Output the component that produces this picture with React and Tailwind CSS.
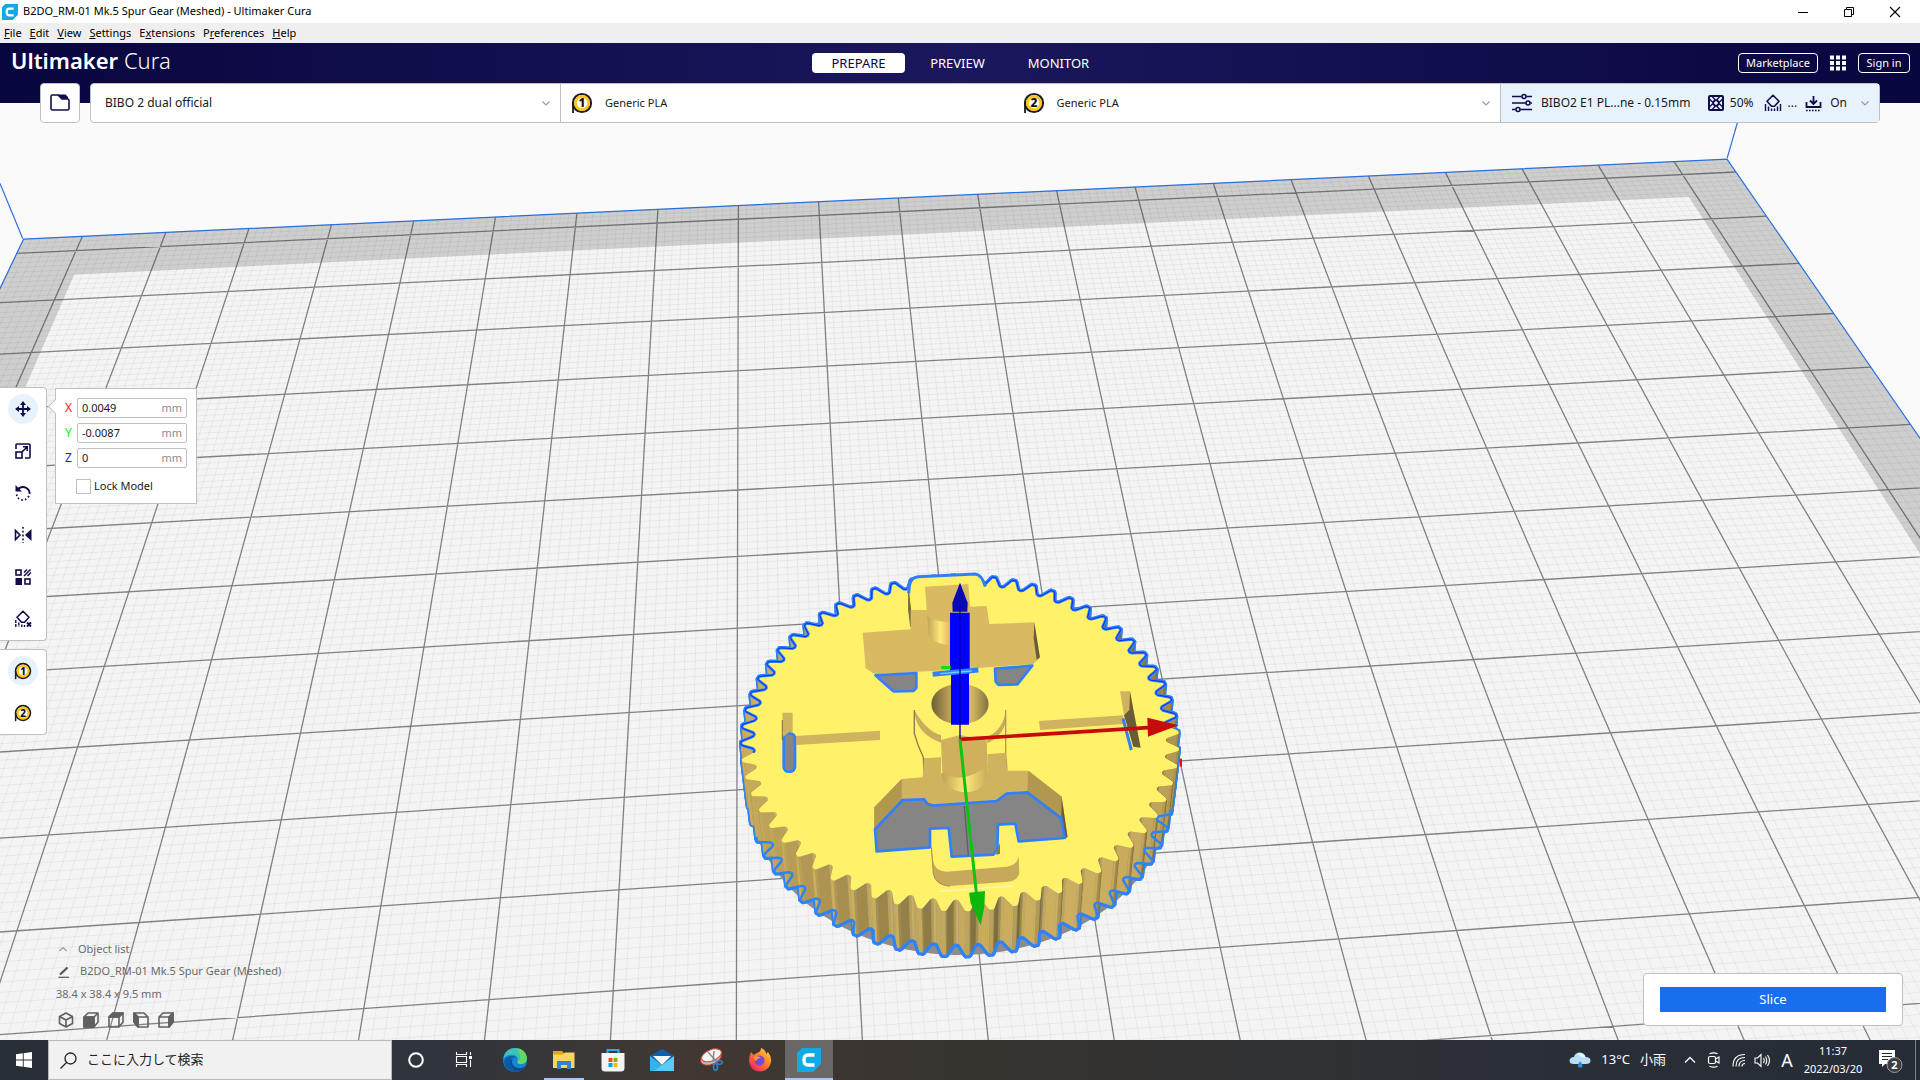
import React from "react";

/* ---------- build plate projection ---------- */

// [plate x, plate y, screen x, screen y], plate units are centimetres
const ANCHORS = [
  [-10.7, 9.3, 22.7, 238.5],
  [10.7, 9.3, 1727.2, 158.2],
  [-10, 8, 55.1, 300.1],
  [-10, 7, 31.8, 352.8],
  [10, 8, 1711.2, 219.5],
  [10, 6, 1774.9, 317],
  [10, 3, 1888.8, 489.9],
  [-2, 8, 738.4, 266.7],
  [-2, 5, 738, 428.2],
  [-2, 2, 737, 628.7],
  [-2, 0, 737, 789.7],
  [-2, -1, 737, 881.7],
  [-6, -2, 237, 1017.7],
  [-5, -2, 363.7, 1008.3],
  [5, -3, 1613.3, 1025.7],
];

function fitPlane(points) {
  const n = 8;
  const a = Array.from({ length: n }, () => new Array(n + 1).fill(0));
  const add = (row, rhs) => {
    for (let i = 0; i < n; i++) {
      for (let j = 0; j < n; j++) a[i][j] += row[i] * row[j];
      a[i][n] += row[i] * rhs;
    }
  };
  points.forEach(([u0, v0, x0, y0]) => {
    const u = u0 / 10, v = v0 / 10, x = x0 / 1000, y = y0 / 1000;
    add([u, v, 1, 0, 0, 0, -u * x, -v * x], x);
    add([0, 0, 0, u, v, 1, -u * y, -v * y], y);
  });
  for (let c = 0; c < n; c++) {
    let p = c;
    for (let r = c + 1; r < n; r++) if (Math.abs(a[r][c]) > Math.abs(a[p][c])) p = r;
    [a[c], a[p]] = [a[p], a[c]];
    for (let r = 0; r < n; r++) {
      if (r === c) continue;
      const f = a[r][c] / a[c][c];
      for (let k = c; k <= n; k++) a[r][k] -= f * a[c][k];
    }
  }
  return a.map((row, i) => row[n] / row[i]);
}

const H = fitPlane(ANCHORS);
const depth = (u, v) => (H[6] * u) / 10 + (H[7] * v) / 10 + 1;
const LIFT = -0.0275 * depth(0, -1.9);

function project(u, v, z = 0) {
  const w = depth(u, v);
  const x = ((H[0] * u) / 10 + (H[1] * v) / 10 + H[2]) * 1000;
  const y = ((H[3] * u) / 10 + (H[4] * v) / 10 + H[5]) * 1000;
  const k = LIFT * z;
  return [(x + 960 * k) / (w + k), (y + 2550 * k) / (w + k)];
}

const fmt = (p) => `${p[0].toFixed(1)},${p[1].toFixed(1)}`;
const poly = (pts) => pts.map(fmt).join(" ");
const seg = (a, b) => `M${fmt(a)}L${fmt(b)}`;

const BX = 10.7, BY = 9.3;
let minor = "";
let major = "";
for (let i = -107; i <= 107; i++) {
  const d = seg(project(i / 10, BY), project(i / 10, -BY));
  if (i % 10 === 0) major += d;
  else minor += d;
}
for (let i = -93; i <= 93; i++) {
  const d = seg(project(-BX, i / 10), project(BX, i / 10));
  if (i % 10 === 0) major += d;
  else minor += d;
}
const rectPts = (x, y) => [project(-x, y), project(x, y), project(x, -y), project(-x, -y)];
const BED = rectPts(BX, BY);
const USABLE = rectPts(9.9, 8.5);

/* ---------- gear body ---------- */

const TEETH = 62;
const PROFILE = [[0.0, 1.8], [0.12, 1.81], [0.36, 1.9], [0.42, 1.915], [0.58, 1.915], [0.64, 1.9], [0.88, 1.81]];
const RIM = [];
for (let t = 0; t < TEETH; t++) {
  PROFILE.forEach(([f, r]) => {
    const ang = (2 * Math.PI * (t + f)) / TEETH - Math.PI / 2;
    RIM.push([r * Math.cos(ang), r * Math.sin(ang)]);
  });
}
const TOP = RIM.map(([u, v]) => project(u, v, 1));
const BOTTOM = RIM.map(([u, v]) => project(u, v, 0));
const SHADOW = Array.from({ length: 120 }, (_, i) => {
  const t = (i * Math.PI) / 60;
  return project(1.9 * Math.cos(t), 1.9 * Math.sin(t));
});
const WALLS = RIM.map((p, i) => {
  const j = (i + 1) % RIM.length;
  const q = RIM[j];
  const du = q[0] - p[0], dv = q[1] - p[1];
  const len = Math.hypot(du, dv);
  const nu = dv / len, nv = -du / len;
  const light = Math.max(0, Math.min(1, 0.42 - 0.4 * nv - 0.35 * nu));
  const mix = (a, b) => Math.round(a + (b - a) * light);
  return {
    v: (p[1] + q[1]) / 2,
    pts: poly([TOP[i], TOP[j], BOTTOM[j], BOTTOM[i]]),
    fill: `rgb(${mix(98, 210)},${mix(85, 179)},${mix(48, 98)})`,
  };
}).sort((a, b) => b.v - a.v);

const half = (pts, keep) => {
  let d = "";
  let open = false;
  const start = Math.floor(RIM.length / 4);
  for (let k = 0; k <= RIM.length; k++) {
    const i = (start * (keep > 0 ? 3 : 1) + k) % RIM.length;
    if (RIM[i][1] * keep >= (keep > 0 ? -0.12 : 0.5)) {
      d += `${open ? "L" : "M"}${fmt(pts[i])}`;
      open = true;
    } else open = false;
  }
  return d;
};
const TOP_EDGE = half(TOP, 1);
const BOTTOM_EDGE = half(BOTTOM, -1);

function Gear() {
  return (
    <g>
      <polygon points={poly(SHADOW)} fill="#8c8c8c" />
      {WALLS.map((w, i) => (
        <polygon key={i} points={w.pts} fill="#2f83f7" stroke="#2f83f7" strokeWidth="4" strokeLinejoin="round" />
      ))}
      {WALLS.map((w, i) => (
        <polygon key={i} points={w.pts} fill={w.fill} stroke={w.fill} strokeWidth="0.4" />
      ))}
      <path d={BOTTOM_EDGE} fill="none" stroke="#2f83f7" strokeWidth="2.5" strokeLinejoin="round" />
      <polygon points={poly(TOP)} fill="#fff26a" />
      <path d={TOP_EDGE} fill="none" stroke="#2f7ffc" strokeWidth="2.8" strokeLinejoin="round" />
      <path d={TOP_EDGE} fill="none" stroke="#0a2cf0" strokeWidth="1" strokeLinejoin="round" />
      <g transform="translate(720 560) scale(0.33333)">
        <path d="M558,102 L566,78 Q572,52 594,50 L766,42 Q786,44 796,84 L800,120 L690,160 L570,140Z" fill="#fff26a" />
        <path d="M566,100 L568,78 Q572,52 594,50 L766,42 Q786,44 796,80" fill="none" stroke="#2f7ffc" strokeWidth="9" />
        <path d="M566,100 V150 L572,200 V150Z" fill="#77673a" stroke="#77673a" strokeWidth="3" />
        <path d="M572,150 L620,150 L615,80 L745,72 L750,140 L800,138 L808,192 L943,187 L957,295 L940,312 L690,330 L465,343 L437,325 L428,218 L572,208Z" fill="#d9ba61" />
        <path d="M622,165 Q635,188 700,185 V257 Q640,253 626,222Z" fill="url(#boss)" />
        <path d="M943,187 L960,292 L950,300 L941,235Z" fill="#6a5d36" />
        <g fill="#858585" stroke="#2f80ff" strokeWidth="8" strokeLinejoin="round">
          <path d="M466,346 L589,339 V384 L580,393 L520,394Z" />
          <path d="M825,326 L937,317 L892,373 L836,375 L827,365Z" />
          <rect x="191" y="520" width="34" height="115" rx="15" />
        </g>
        {/* hub */}
        <path d="M583,450 Q590,520 663,548 V528 H800 V528 Q850,500 857,450 L857,500 L858,578 L612,595 L604,550 Q580,530 583,450Z" fill="#fff26a" />
        <path d="M583,450 Q586,520 663,548 V525 Q620,515 583,450Z" fill="#c9ad5c" />
        <path d="M857,450 Q850,510 802,530 V550 Q850,525 857,485Z" fill="#c9ad5c" />
        <path d="M583,450 V520 Q592,555 610,592 L612,645" fill="none" stroke="#8d7a43" strokeWidth="4" />
        <path d="M857,450 V578 L861,632" fill="none" stroke="#b59b52" strokeWidth="4" />
        <ellipse cx="720" cy="432" rx="86" ry="61" fill="url(#bore)" />
        <path d="M612,595 L663,592 V640 H802 V583 L858,578 L860,632 L925,632 L1025,710 L1042,832 L1030,775 L922,698 L860,703 L830,725 L640,738 L612,722 L548,722 L463,808 V742 L545,657 L608,652Z" fill="#d0b35f" />
        <path d="M545,657 L463,742 V808 L545,722Z" fill="#b2974f" />
        <path d="M925,632 L1025,710 V775 L922,698Z" fill="#b2974f" />
        <path d="M1025,710 L1043,832 L1032,834 L1024,770Z" fill="#6a5d36" />
        <path d="M663,540 L720,525 L800,540 L802,620 Q790,690 735,695 Q670,690 667,640Z" fill="#cfb05c" />
        <path d="M667,640 Q735,675 802,615 V650 Q790,695 735,697 Q675,692 667,655Z" fill="url(#boss)" />
        {/* cut-out */}
        <path d="M548,720 L612,718 L622,731 L640,737 L830,723 L860,701 L922,697 L1024,775 L1034,834 L896,844 L886,791 L834,794 L832,868 L820,884 L695,890 L686,804 L630,806 V862 L470,874 L465,808Z" fill="#858585" stroke="#2f80ff" strokeWidth="8" strokeLinejoin="round" />
        <path d="M733,738 L745,886" stroke="#5f5f5f" strokeWidth="4" />
        <path d="M634,862 L640,905 Q645,932 680,935 L860,920 Q893,915 896,888 L898,940 Q892,965 855,966 L690,978 Q645,975 640,940Z" fill="#c6a95a" />
        <path d="M634,862 L640,940 Q645,975 690,979" fill="none" stroke="#a58c4b" strokeWidth="3" />
        <path d="M834,862 L840,850 V882 L828,884Z" fill="#8d7a43" />
        <path d="M660,994 L880,978" stroke="#fff9b0" strokeWidth="4" />
        {/* spokes */}
        <path d="M187,458 H218 V520 L208,516 L190,530Z" fill="#d0b35f" />
        <path d="M187,480 V540" stroke="#77673a" strokeWidth="3" />
        <path d="M228,528 L480,512 V540 L228,555Z" fill="#d0b35f" />
        <path d="M957,483 L1210,466 V492 L960,510Z" fill="#d0b35f" />
        <path d="M1200,394 H1230 L1240,480 L1212,466Z" fill="#d0b35f" />
        <path d="M1230,394 L1262,563 L1240,560 L1212,466 L1228,450Z" fill="#6a5d36" />
        <path d="M1209,475 L1234,570" stroke="#2f80ff" strokeWidth="9" />
        <rect x="1379" y="596" width="7" height="24" fill="#e81010" />
        {/* axis handles */}
        <path d="M690,158 H749 V340 H747 V494 H693 V340 H690Z" fill="#0000fe" />
        <path d="M638,343 L775,330" stroke="#2f80ff" strokeWidth="15" />
        <path d="M660,341 L755,333" stroke="#6fd0ff" strokeWidth="4" />
        <rect x="664" y="318" width="28" height="9" fill="#00e400" />
        <path d="M720,68 L743,128 L742,155 H698 L697,128Z" fill="#0a0ab4" />
        <path d="M720,140 V538" stroke="#0000a8" strokeWidth="4" />
        <path d="M720,538 L1284,503" stroke="#c60c0a" strokeWidth="11" />
        <path d="M1282,473 L1376,496 L1284,530Z" fill="#c60c0a" />
        <path d="M720,538 L769,998" stroke="#0bc40b" strokeWidth="9" />
        <path d="M747,998 L795,993 L793,1040 L782,1096 L752,1030Z" fill="#0bb80b" />
      </g>
    </g>
  );
}

function Scene() {
  return (
    <svg className="absolute inset-0 h-full w-full" viewBox="0 103 1920 937" preserveAspectRatio="xMidYMid slice" aria-label="Build plate">
      <defs>
        <linearGradient id="boss">
          <stop offset="0" stopColor="#c0a356" />
          <stop offset="0.5" stopColor="#ffe979" />
          <stop offset="1" stopColor="#c9ac5b" />
        </linearGradient>
        <linearGradient id="bore">
          <stop offset="0" stopColor="#6d5f37" />
          <stop offset="0.3" stopColor="#b89d53" />
          <stop offset="0.7" stopColor="#d6b962" />
          <stop offset="1" stopColor="#80703f" />
        </linearGradient>
      </defs>
      <polygon points={poly(BED)} fill="#cecece" />
      <polygon points={poly(USABLE)} fill="#f4f4f4" />
      <path d={minor} stroke="#000" strokeOpacity="0.05" strokeWidth="1" fill="none" />
      <path d={major} stroke="#2e2e34" strokeOpacity="0.58" strokeWidth="1.3" fill="none" />
      <g stroke="#2a6fdc" strokeWidth="1.2" fill="none">
        <polygon points={poly(BED)} />
        <path d="M22.7,238.5 L0,183.5 M1727.2,158.2 L1741,110" />
      </g>
      <Gear />
    </svg>
  );
}

/* ---------- icons ---------- */

function Svg({ size = 18, box = 18, className = "", children }) {
  return (
    <svg width={size} height={size} viewBox={`0 0 ${box} ${box}`} fill="none" stroke="currentColor" strokeWidth="1.6" className={`shrink-0 ${className}`} aria-hidden="true">
      {children}
    </svg>
  );
}

const Chevron = ({ up = false }) => (
  <Svg size={8} box={8} className="text-[#9a9a9a]">
    <path d={up ? "M0.5 6L4 2.5L7.5 6" : "M0.5 2.5L4 6L7.5 2.5"} strokeWidth="1.2" />
  </Svg>
);

const Spool = ({ n, size = 22 }) => (
  <Svg size={size} box={22}>
    <circle cx="11" cy="11" r="9" fill="#fff" stroke="#1c1c1c" strokeWidth="2.2" />
    <circle cx="11" cy="11" r="6.6" stroke="#ffc61e" strokeWidth="2.8" />
    <path d="M2 11V21" stroke="#1c1c1c" strokeWidth="1.8" />
    <text x="11" y="15.4" textAnchor="middle" fill="#111" stroke="none" fontSize="12" fontWeight="800" fontFamily="Noto Sans, sans-serif">{n}</text>
  </Svg>
);

const CuraMark = ({ size }) => (
  <Svg size={size} box={24}>
    <path d="M5 0H24V16L16 24H0V5Z" fill="#12a9e4" stroke="none" />
    <path d="M17.5 7H11Q7 7 7 12T11 17H17.5" stroke="#fff" strokeWidth="3.4" />
  </Svg>
);

const Folder = () => (
  <Svg size={20} box={20}>
    <path d="M1 15.500V3.500Q1 2 2.500 2H8L12 6H17.500Q19 6 19 7.500V15.500Q19 17 17.500 17H2.500Q1 17 1 15.500Z" />
    <path d="M7.500 1.500H15.500L18 4V6H11.500Z" fill="currentColor" stroke="none" />
  </Svg>
);

const Sliders = () => (
  <Svg size={22} box={22}>
    <path d="M1 4.500H10.500M15.500 4.500H21M1 11H14.500M19.500 11H21M1 17.500H4.500M9.500 17.500H21" />
    <circle cx="13" cy="4.500" r="2" /><circle cx="17" cy="11" r="2" /><circle cx="7" cy="17.500" r="2" />
  </Svg>
);

const Infill = () => (
  <Svg size={16} box={16}>
    <rect width="16" height="16" rx="2" fill="currentColor" stroke="none" />
    <path
      d="M8 5.800L10.200 8L8 10.200L5.800 8ZM5.500 2H10.500L8 4.500ZM5.500 14H10.500L8 11.500ZM2 5.500V10.500L4.500 8ZM14 5.500V10.500L11.500 8ZM2 2H3.800L6.200 4.800L4.800 6.200L2 3.800ZM14 2H12.200L9.800 4.800L11.200 6.200L14 3.800ZM2 14H3.800L6.200 11.200L4.800 9.800L2 12.200ZM14 14H12.200L9.800 11.200L11.200 9.800L14 12.200Z"
      fill="#e7f2fd"
      stroke="none"
    />
  </Svg>
);

const Support = () => (
  <Svg>
    <path d="M9 1.200L15 7.200L10.500 12.200H7.500L3 7.200Z" strokeLinejoin="round" />
    <path d="M1.500 10V17M4.500 12.500V17M7.500 14.500V17M10.500 14.500V17M13.500 12.500V17M16.500 10V17" strokeWidth="1.400" />
  </Svg>
);

const Adhesion = () => (
  <Svg size={17} box={17}>
    <path d="M8.500 1V8M5 5.500L8.500 9L12 5.500M1.500 7V12H15.500V7" strokeWidth="1.800" />
    <path d="M1 15.500H16" strokeDasharray="1.600 1.400" />
  </Svg>
);

const Move = () => (
  <Svg>
    <path d="M9 3V15M3 9H15" strokeWidth="1.800" />
    <path d="M9 1L12 5H6ZM9 17L12 13H6ZM1 9L5 6V12ZM17 9L13 6V12Z" fill="currentColor" stroke="none" />
  </Svg>
);

const Scale = () => (
  <Svg>
    <path d="M2 7V3Q2 2 3 2H15Q16 2 16 3V15Q16 16 15 16H11" />
    <rect x="2" y="10" width="6" height="6" />
    <path d="M8 10L13 5M9 4.800H13.200V9" />
  </Svg>
);

const Rotate = () => (
  <Svg>
    <path d="M4 5Q8 1.500 12.500 4Q16 6.500 15.500 10" strokeWidth="1.900" />
    <path d="M1.500 1V7.500H8Z" fill="currentColor" stroke="none" />
    <path d="M15 12Q12 16.500 8 16Q3 15 2.500 9.500" strokeDasharray="1.600 2.200" strokeWidth="1.700" />
  </Svg>
);

const Mirror = () => (
  <Svg>
    <path d="M1.500 4.500V13.500L6 9Z" />
    <path d="M17.500 3V15L11 9Z" fill="currentColor" stroke="none" />
    <path d="M9 1V17" strokeDasharray="1.800 2" />
  </Svg>
);

const PerModel = () => (
  <Svg>
    <rect x="2" y="2" width="5" height="5" /><rect x="11" y="11" width="5" height="5" />
    <rect x="1.500" y="10" width="6.500" height="7" fill="currentColor" stroke="none" />
    <path d="M10 4.500L13 1.500M10 8L16.500 1.500M13.500 8L17 4.500" strokeWidth="1.500" />
  </Svg>
);

const Blocker = () => (
  <Svg>
    <path d="M9 1.200L15 7.200L10.500 12.200H7.500L3 7.200Z" strokeLinejoin="round" />
    <path d="M1.800 10V17M4.800 12.500V17M7.800 14.500V17M10.500 15V17" strokeDasharray="3 1" strokeWidth="1.400" />
    <path d="M13 12.500L17 16.500M17 12.500L13 16.500" strokeWidth="1.800" />
  </Svg>
);

const CubeView = ({ face }) => (
  <Svg size={16} box={16} className="text-[#606060]">
    {face === "iso" && <path d="M8 1L14.500 4.500V11.500L8 15L1.500 11.500V4.500ZM1.500 4.500L8 8L14.500 4.500M8 8V15" strokeLinejoin="round" />}
    {face !== "iso" && face !== "left" && (
      <g strokeLinejoin="round">
        <path d="M1 5L5 1H15V10L11 15H1ZM1 5H11V15M11 5L15 1" />
        {face === "front" && <rect x="1" y="5" width="10" height="10" fill="currentColor" />}
        {face === "top" && <path d="M1 5L5 1H15L11 5Z" fill="currentColor" />}
        {face === "right" && <path d="M11 5L15 1V10L11 15Z" fill="currentColor" />}
      </g>
    )}
    {face === "left" && (
      <g strokeLinejoin="round">
        <path d="M15 5L11 1H1V10L5 15H15ZM15 5H5V15M5 5L1 1" />
        <path d="M5 5L1 1V10L5 15Z" fill="currentColor" />
      </g>
    )}
  </Svg>
);

/* ---------- window chrome ---------- */

function TitleBar() {
  return (
    <div className="flex h-[23px] shrink-0 items-center bg-white pr-0.5 pl-0.5 text-[11px] text-black">
      <CuraMark size={16} />
      <h1 className="ml-[5px] flex-1">B2DO_RM-01 Mk.5 Spur Gear (Meshed) - Ultimaker Cura</h1>
      <button aria-label="Minimize" className="flex w-[46px] justify-center"><Svg size={12} box={12}><path d="M1 6.500H11" strokeWidth="1" /></Svg></button>
      <button aria-label="Restore" className="flex w-[46px] justify-center"><Svg size={12} box={12}><path d="M1.500 3.500H8.500V10.500H1.500ZM3.500 3.500V1.500H10.500V8.500H8.500" strokeWidth="1" /></Svg></button>
      <button aria-label="Close" className="flex w-[46px] justify-center"><Svg size={12} box={12}><path d="M1 1L11 11M11 1L1 11" strokeWidth="1.100" /></Svg></button>
    </div>
  );
}

const MENUS = [["", "F", "ile"], ["", "E", "dit"], ["", "V", "iew"], ["", "S", "ettings"], ["E", "x", "tensions"], ["P", "r", "eferences"], ["", "H", "elp"]];

function MenuBar() {
  return (
    <nav className="flex h-5 shrink-0 items-center gap-2 bg-[#efefef] pl-1 text-[11px] text-black">
      {MENUS.map(([a, b, c]) => (
        <button key={a + b + c}>{a}<span className="underline">{b}</span>{c}</button>
      ))}
    </nav>
  );
}

function Header() {
  return (
    <header className="grid h-[60px] shrink-0 grid-cols-[1fr_auto_1fr] items-start bg-[linear-gradient(90deg,#08063f_0%,#1a175c_50%,#08063f_100%)] pr-2.5 pl-[11px] text-white">
      <div className="pt-px text-[22px] leading-8"><span className="font-semibold">Ultimaker</span> <span className="font-light">Cura</span></div>
      <div className="flex pt-2.5 pr-1 text-[13px] leading-5">
        <button className="w-[93px] rounded-sm bg-white text-[#08073f]">PREPARE</button>
        <button className="ml-2 w-[89px]">PREVIEW</button>
        <button className="ml-2.5 w-[93px]">MONITOR</button>
      </div>
      <div className="flex items-center justify-end gap-3 pt-2.5 text-[11px] leading-[18px]">
        <button className="w-20 rounded-sm border border-white">Marketplace</button>
        <button aria-label="Applications">
          <Svg size={16} box={16}><path d="M0 2.500H16M0 8H16M0 13.500H16" strokeWidth="4" strokeDasharray="4 2" /></Svg>
        </button>
        <button className="w-[52px] rounded-sm border border-white">Sign in</button>
      </div>
    </header>
  );
}

function Toolbar() {
  return (
    <div className="relative z-10 -mt-5 flex h-10 gap-2.5 px-10 text-[12px] text-[#191919]">
      <button aria-label="Open file" className="flex w-10 items-center justify-center rounded-sm border border-[#c0c0c0] bg-white text-[#0e0d4a]"><Folder /></button>
      <div className="flex flex-1 rounded-sm border border-[#c0c0c0] bg-white">
        <button className="flex w-[470px] items-center justify-between border-r border-[#c0c0c0] pr-2.5 pl-3.5">BIBO 2 dual official<Chevron /></button>
        <button className="flex flex-1 items-center border-r border-[#c0c0c0] pr-2.5 pl-2.5 text-[11px]">
          <span className="flex flex-1 items-center gap-3"><Spool n="1" />Generic PLA</span>
          <span className="flex flex-1 items-center gap-3"><Spool n="2" />Generic PLA</span>
          <span className="ml-2"><Chevron /></span>
        </button>
        <button className="flex w-[378px] items-center bg-[#e7f2fd] pr-2.5 pl-2.5">
          <span className="text-[#0e0d4a]"><Sliders /></span>
          <span className="ml-2 flex-1 text-left whitespace-nowrap">BIBO2 E1 PL...ne - 0.15mm</span>
          <span className="mr-1.5 text-[#0e0d4a]"><Infill /></span>50%
          <span className="mr-1.5 ml-2.5 text-[#0e0d4a]"><Support /></span>...
          <span className="mr-2 ml-2 text-[#0e0d4a]"><Adhesion /></span>On
          <span className="ml-3.5"><Chevron /></span>
        </button>
      </div>
    </div>
  );
}

const TOOLS = [["Move", Move], ["Scale", Scale], ["Rotate", Rotate], ["Mirror", Mirror], ["Per model settings", PerModel], ["Support blocker", Blocker]];

function ToolButton({ label, active, children }) {
  return (
    <button aria-label={label} className={active ? "flex size-[30px] items-center justify-center rounded-full bg-[#e7f2fd]" : "flex size-[30px] items-center justify-center rounded-full"}>
      {children}
    </button>
  );
}

const AXES = [["X", "0.0049", "text-[#ff1a1a]"], ["Y", "-0.0087", "text-[#10e810]"], ["Z", "0", "text-[#1a1aff]"]];

function SidePanels() {
  return (
    <div className="relative mt-[264px] flex items-start gap-2">
      <div className="flex flex-col gap-2">
        <div className="flex w-[47px] flex-col items-center gap-3 rounded-r-sm border border-l-0 border-[#c0c0c0] bg-white py-[6px] text-[#0e0d4a]">
          {TOOLS.map(([label, Icon], i) => <ToolButton key={label} label={label} active={i === 0}><Icon /></ToolButton>)}
        </div>
        <div className="flex w-[47px] flex-col items-center gap-3 rounded-r-sm border border-l-0 border-[#c0c0c0] bg-white py-[6px]">
          <ToolButton label="Extruder 1" active><Spool n="1" size={18} /></ToolButton>
          <ToolButton label="Extruder 2"><Spool n="2" size={18} /></ToolButton>
        </div>
      </div>
      <div className="relative mt-px flex w-[142px] flex-col gap-[5px] border border-[#c0c0c0] bg-white px-[9px] py-[9px] text-[11px] text-[#191919]">
        <span className="absolute top-3 -left-[6px] size-[11px] rotate-45 border-b border-l border-[#c0c0c0] bg-white" />
        {AXES.map(([axis, value, color]) => (
          <label key={axis} className="flex h-5 items-center">
            <span className={`w-3 text-[12px] ${color}`}>{axis}</span>
            <span className="flex h-5 flex-1 items-center rounded-xs border border-[#c0c0c0] px-1">
              <input defaultValue={value} className="w-0 min-w-0 flex-1 outline-none" />
              <span className="text-[#8c8c8c]">mm</span>
            </span>
          </label>
        ))}
        <label className="mt-[5px] ml-[11px] flex items-center gap-[3px] leading-[16px]">
          <input type="checkbox" className="size-[15px] appearance-none border border-[#c0c0c0] bg-white" />
          Lock Model
        </label>
      </div>
    </div>
  );
}

function ObjectInfo() {
  return (
    <div className="flex flex-col pl-14 text-[11px] text-[#6b6b6b]">
      <button className="flex h-[22px] items-center gap-[11px] pl-[3px]"><Chevron up />Object list</button>
      <button className="flex h-[23px] items-center gap-2.5 pl-0.5">
        <Svg size={12} box={12} className="text-[#555]"><path d="M0.500 11.300H11" strokeWidth="1.200" /><path d="M2 8.500L9.500 1.500" strokeWidth="2.200" /></Svg>
        B2DO_RM-01 Mk.5 Spur Gear (Meshed)
      </button>
      <p className="h-[22px] leading-[21px]">38.4 x 38.4 x 9.5 mm</p>
      <div className="mt-[7px] flex gap-[9px] pl-0.5">
        {["iso", "front", "top", "left", "right"].map((f) => (
          <button key={f} aria-label={`${f} view`}><CubeView face={f} /></button>
        ))}
      </div>
    </div>
  );
}

/* ---------- taskbar ---------- */

const Edge = () => (
  <Svg size={24} box={24}>
    <circle cx="12" cy="12" r="12" fill="#1487d4" stroke="none" />
    <path d="M0.500 10Q3 0 12 0Q22 0.500 24 10Q24 15.500 18 16Q13.500 16 14.500 13Q16 9 11 7Q5 5.500 0.500 10Z" fill="#3fc2b8" stroke="none" />
    <path d="M14 0.200Q23 1.500 24 10Q24 15.500 18 16Q14 16 14.500 13.500Q20 12 14 0.200Z" fill="#62d964" stroke="none" />
    <path d="M8 10Q6 20 16 20.500Q19 20.500 22 18.500Q18 25 10 23.800Q1 21 1 13Q3 8 9 8Q12 8 13.500 10Q9 9 8 10Z" fill="#0c59a4" stroke="none" />
    <path d="M9.500 10Q7 18 15 20Q19 20.500 22 18.500Q20 22 16 23Q7 21 7.500 14Q7.500 11 9.500 10Z" fill="#114a8b" stroke="none" />
  </Svg>
);

const Explorer = () => (
  <Svg size={24} box={24}>
    <path d="M1 3H10L12 5H22V20H1Z" fill="#e8a310" stroke="none" />
    <path d="M1 6.500H11L13 4.500H22.500V20H1Z" fill="#fcd462" stroke="none" />
    <path d="M5 13H19V21H15V17H9V21H5Z" fill="#2f86cf" stroke="none" />
  </Svg>
);

const Store = () => (
  <Svg size={24} box={24}>
    <path d="M6.500 6V2H17.500V6" stroke="#2aa9ee" strokeWidth="2.200" />
    <path d="M0.500 5H23.500V20Q23.500 23.500 20 23.500H4Q0.500 23.500 0.500 20Z" fill="#f4f4f4" stroke="none" />
    <g stroke="none"><rect x="7.500" y="10" width="4" height="4" fill="#f25022" /><rect x="12.500" y="10" width="4" height="4" fill="#7fba00" /><rect x="7.500" y="15" width="4" height="4" fill="#00a4ef" /><rect x="12.500" y="15" width="4" height="4" fill="#ffb900" /></g>
  </Svg>
);

const Mail = () => (
  <Svg size={24} box={24}>
    <g stroke="none">
      <path d="M0 8L12 1L24 8V14H0Z" fill="#0f5fb0" /><path d="M3 8H21L12 17Z" fill="#f4f7fa" />
      <path d="M0 8L16 20L24 23H0Z" fill="#35b1ee" /><path d="M24 8L4 23H24Z" fill="#56cdf9" />
    </g>
  </Svg>
);

const Snip = () => (
  <Svg size={24} box={24}>
    <ellipse cx="12" cy="10" rx="11" ry="6.500" transform="rotate(-22 12 10)" fill="#b9b9b9" stroke="#c22b2b" strokeWidth="1" />
    <ellipse cx="12.500" cy="7.500" rx="10.500" ry="5.500" transform="rotate(-22 12 7.500)" fill="#f6f6f6" stroke="#e04444" strokeWidth="1" />
    <path d="M9 4L18 14M15 3L14 14" stroke="#8a8a8a" strokeWidth="1.500" />
    <ellipse cx="16.500" cy="19" rx="2" ry="3.200" stroke="#2b84c9" /><ellipse cx="20.500" cy="14.500" rx="2.800" ry="1.800" stroke="#2b84c9" />
  </Svg>
);

const Firefox = () => (
  <Svg size={24} box={24}>
    <defs><linearGradient id="ff" x1="1" y1="0" x2="0.200" y2="1"><stop offset="0" stopColor="#ffe14a" /><stop offset="0.450" stopColor="#ff8a1e" /><stop offset="1" stopColor="#f0206a" /></linearGradient></defs>
    <path d="M3 4L5.500 7L9 5Q13 4 13 0Q18 2 18 6L20 4Q24 9 23 14Q21 23 12 23.500Q2 23 1 13Q1 8 3 4Z" fill="url(#ff)" stroke="none" />
    <circle cx="11.500" cy="12.500" r="5" fill="#7646d8" stroke="none" />
    <path d="M6 9Q10 7 13 10Q9 10 8 13Q6 12 6 9Z" fill="#ff9a1e" stroke="none" />
  </Svg>
);

function TaskButton({ label, active, running, children }) {
  return (
    <button aria-label={label} className={`flex h-10 w-12 items-center justify-center ${active ? "bg-[#696867] shadow-[inset_0_-2px_#a8c7f8]" : ""} ${running ? "relative" : ""}`}>
      {children}
      {running && <span className="absolute inset-x-1 bottom-0 h-0.5 bg-[#a8c7f8]" />}
    </button>
  );
}

function Taskbar() {
  return (
    <footer className="flex h-10 shrink-0 items-center bg-[linear-gradient(90deg,#282e36_0%,#2f343d_22%,#403833_35%,#38342f_50%,#2c3036_75%,#252c36_100%)] font-['Noto_Sans','Noto_Sans_CJK_JP',sans-serif] text-white">
      <TaskButton label="Start">
        <Svg size={16} box={16}><path d="M0 2.300L6.800 1.300V7.500H0ZM7.700 1.200L16 0V7.500H7.700ZM0 8.400H6.800V14.700L0 13.700ZM7.700 8.400H16V16L7.700 14.800Z" fill="#fff" stroke="none" /></Svg>
      </TaskButton>
      <label className="flex h-10 w-[344px] items-center gap-2.5 border border-[#b8b8b8] bg-[#f1f1f1] pl-[11px] text-[#222]">
        <Svg size={17} box={17}><circle cx="10.500" cy="6.500" r="5.500" strokeWidth="1.300" /><path d="M6.500 10.500L0.500 16.500" strokeWidth="1.300" /></Svg>
        <input aria-label="検索" placeholder="ここに入力して検索" className="min-w-0 flex-1 text-[13px] outline-none placeholder:text-[#222]" />
      </label>
      <TaskButton label="Cortana"><Svg size={16} box={16}><circle cx="8" cy="8" r="6.800" strokeWidth="2" /></Svg></TaskButton>
      <TaskButton label="Task view">
        <Svg size={18} box={18}><path d="M1.500 1V3.500H11.500V1M1.500 16V13.500H11.500V16M1.500 5.500H11.500V11.500H1.500ZM15.500 1V4M15.500 9V16" strokeWidth="1.100" /><rect x="14" y="5" width="3" height="3" fill="#fff" stroke="none" /></Svg>
      </TaskButton>
      <span className="w-[3px]" />
      <div className="flex gap-px">
        <TaskButton label="Microsoft Edge"><Edge /></TaskButton>
        <TaskButton label="Explorer" running><Explorer /></TaskButton>
        <TaskButton label="Store"><Store /></TaskButton>
        <TaskButton label="Mail"><Mail /></TaskButton>
        <TaskButton label="Snipping tool"><Snip /></TaskButton>
        <TaskButton label="Firefox"><Firefox /></TaskButton>
        <TaskButton label="Ultimaker Cura" active><CuraMark size={24} /></TaskButton>
      </div>
      <div className="ml-auto flex items-center text-[13px]">
        <button className="flex items-center gap-2.5">
          <Svg size={22} box={22}>
            <path d="M5 15Q0.500 15 0.500 11.500Q1 8 5 8Q6 3.500 11 3.500Q16 4 16.500 8Q21.500 8 21.500 11.500Q21.500 15 17 15Z" fill="#b9defa" stroke="none" />
            <path d="M8 5Q12 3 15 6Q16 7 16.500 9Q11 8 8 5Z" fill="#e8f5ff" stroke="none" />
            <path d="M11 12Q14 16 13.500 17.500Q11 20 8.800 17.500Q8.500 15.500 11 12Z" fill="#2a8be0" stroke="none" />
          </Svg>
          <span>13°C</span><span>小雨</span>
        </button>
        <button aria-label="Hidden icons" className="ml-[18px]"><Svg size={12} box={12}><path d="M1 8.500L6 3.500L11 8.500" strokeWidth="1.300" /></Svg></button>
        <button aria-label="Meet now" className="ml-2.5"><Svg size={16} box={16}><rect x="2.500" y="4.500" width="7" height="7" rx="1.500" strokeWidth="1.200" /><path d="M9.500 7L13 5V11L9.500 9M3.500 1.800Q8 0 11.500 1.800M3.500 14.200Q8 16 11.500 14.200" strokeWidth="1.100" /></Svg></button>
        <button aria-label="Network" className="ml-2.5"><Svg size={14} box={14}><path d="M1 13.500Q1 1.500 13 1.500M4 13.500Q4 4.500 13 4.500M7 13.500Q7 7.500 13 7.500M10 13.500Q10 10.500 13 10.500" strokeWidth="1.100" /></Svg></button>
        <button aria-label="Volume" className="ml-2"><Svg size={17} box={17}><path d="M1 6H3.500L7 2.500V14.500L3.500 11H1ZM9.500 6Q11 8.500 9.500 11M11.500 4.500Q14 8.500 11.500 12.500M13.500 3Q17.500 8.500 13.500 14" strokeWidth="1.100" /></Svg></button>
        <button aria-label="Input mode" className="ml-2 w-4 text-[18px]">A</button>
        <button className="ml-2 w-[60px] text-center text-[11px] leading-[18px] whitespace-nowrap"><span className="block">11:37</span><span className="block">2022/03/20</span></button>
        <button aria-label="Notifications" className="ml-3.5 flex">
          <Svg size={28} box={28}>
            <path d="M2 4H18V18H8L5 21V18H2Z" fill="#fff" stroke="none" />
            <path d="M5 7.500H15M5 10.500H15M5 13.500H11" stroke="#252c36" strokeWidth="1.200" />
            <circle cx="17.500" cy="19" r="7.500" fill="#3a3d42" stroke="#9a9da2" strokeWidth="1" />
            <text x="17.500" y="23" textAnchor="middle" fill="#fff" stroke="none" fontSize="11" fontWeight="700" fontFamily="Noto Sans, sans-serif">2</text>
          </Svg>
        </button>
        <span className="mr-1 ml-2.5 h-10 border-l border-[#7d8187]" />
      </div>
    </footer>
  );
}

export default function App() {
  return (
    <div className="flex h-screen flex-col overflow-hidden bg-[#fafafa] font-['Noto_Sans',sans-serif]">
      <TitleBar />
      <MenuBar />
      <Header />
      <Toolbar />
      <main className="relative -mt-5 flex flex-1 flex-col">
        <Scene />
        <div className="relative flex flex-1 flex-col justify-between pt-5">
          <SidePanels />
          <div className="flex items-end justify-between pr-[17px] pb-3">
            <ObjectInfo />
            <div className="mb-0.5 w-[260px] rounded-sm border border-[#c0c0c0] bg-white px-4 py-[13px]">
              <button className="block h-[25px] w-full bg-[#196ef0] text-[13px] leading-[25px] text-white">Slice</button>
            </div>
          </div>
        </div>
      </main>
      <Taskbar />
    </div>
  );
}
